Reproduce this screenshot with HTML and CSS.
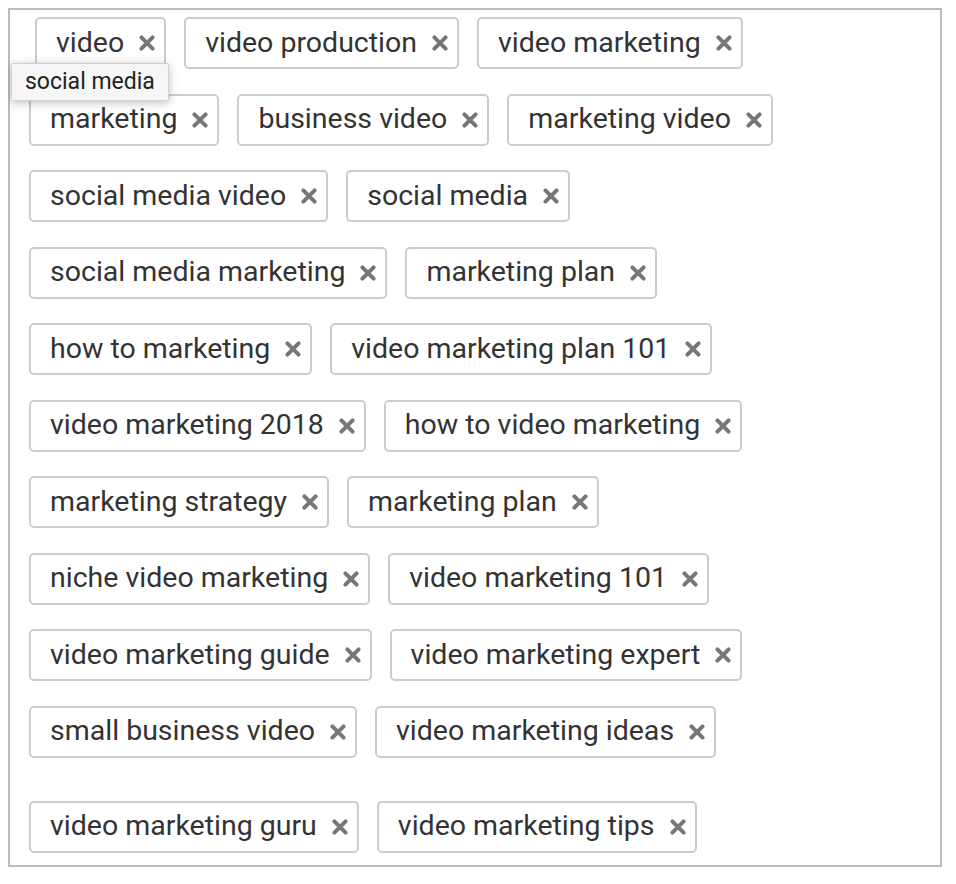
FILE: index.html
```html
<!DOCTYPE html>
<html lang="en">
<head>
  <meta charset="UTF-8">
  <title>Tags</title>
  <link rel="stylesheet" href="styles.css">
</head>
<body>
  <div class="tag-box">
    <div class="tag-row first-row">
      <span class="chip">video<svg class="x" viewBox="0 0 16 16"><path d="M3 3L13 13M13 3L3 13"/></svg></span>
      <span class="chip">video production<svg class="x" viewBox="0 0 16 16"><path d="M3 3L13 13M13 3L3 13"/></svg></span>
      <span class="chip">video marketing<svg class="x" viewBox="0 0 16 16"><path d="M3 3L13 13M13 3L3 13"/></svg></span>
    </div>
    <div class="tag-row">
      <span class="chip">marketing<svg class="x" viewBox="0 0 16 16"><path d="M3 3L13 13M13 3L3 13"/></svg></span>
      <span class="chip">business video<svg class="x" viewBox="0 0 16 16"><path d="M3 3L13 13M13 3L3 13"/></svg></span>
      <span class="chip">marketing video<svg class="x" viewBox="0 0 16 16"><path d="M3 3L13 13M13 3L3 13"/></svg></span>
    </div>
    <div class="tag-row">
      <span class="chip">social media video<svg class="x" viewBox="0 0 16 16"><path d="M3 3L13 13M13 3L3 13"/></svg></span>
      <span class="chip">social media<svg class="x" viewBox="0 0 16 16"><path d="M3 3L13 13M13 3L3 13"/></svg></span>
    </div>
    <div class="tag-row">
      <span class="chip">social media marketing<svg class="x" viewBox="0 0 16 16"><path d="M3 3L13 13M13 3L3 13"/></svg></span>
      <span class="chip">marketing plan<svg class="x" viewBox="0 0 16 16"><path d="M3 3L13 13M13 3L3 13"/></svg></span>
    </div>
    <div class="tag-row">
      <span class="chip">how to marketing<svg class="x" viewBox="0 0 16 16"><path d="M3 3L13 13M13 3L3 13"/></svg></span>
      <span class="chip">video marketing plan 101<svg class="x" viewBox="0 0 16 16"><path d="M3 3L13 13M13 3L3 13"/></svg></span>
    </div>
    <div class="tag-row">
      <span class="chip">video marketing 2018<svg class="x" viewBox="0 0 16 16"><path d="M3 3L13 13M13 3L3 13"/></svg></span>
      <span class="chip">how to video marketing<svg class="x" viewBox="0 0 16 16"><path d="M3 3L13 13M13 3L3 13"/></svg></span>
    </div>
    <div class="tag-row">
      <span class="chip">marketing strategy<svg class="x" viewBox="0 0 16 16"><path d="M3 3L13 13M13 3L3 13"/></svg></span>
      <span class="chip">marketing plan<svg class="x" viewBox="0 0 16 16"><path d="M3 3L13 13M13 3L3 13"/></svg></span>
    </div>
    <div class="tag-row">
      <span class="chip">niche video marketing<svg class="x" viewBox="0 0 16 16"><path d="M3 3L13 13M13 3L3 13"/></svg></span>
      <span class="chip">video marketing 101<svg class="x" viewBox="0 0 16 16"><path d="M3 3L13 13M13 3L3 13"/></svg></span>
    </div>
    <div class="tag-row">
      <span class="chip">video marketing guide<svg class="x" viewBox="0 0 16 16"><path d="M3 3L13 13M13 3L3 13"/></svg></span>
      <span class="chip">video marketing expert<svg class="x" viewBox="0 0 16 16"><path d="M3 3L13 13M13 3L3 13"/></svg></span>
    </div>
    <div class="tag-row">
      <span class="chip">small business video<svg class="x" viewBox="0 0 16 16"><path d="M3 3L13 13M13 3L3 13"/></svg></span>
      <span class="chip">video marketing ideas<svg class="x" viewBox="0 0 16 16"><path d="M3 3L13 13M13 3L3 13"/></svg></span>
    </div>
    <div class="tag-row last-row">
      <span class="chip">video marketing guru<svg class="x" viewBox="0 0 16 16"><path d="M3 3L13 13M13 3L3 13"/></svg></span>
      <span class="chip">video marketing tips<svg class="x" viewBox="0 0 16 16"><path d="M3 3L13 13M13 3L3 13"/></svg></span>
    </div>

    <div class="tooltip">social media</div>
  </div>
</body>
</html>
```

FILE: styles.css
```css
body {
  margin: 8px;
  font-family: Roboto, "Liberation Sans", Arial, sans-serif;
  color: #333;
  background: #fff;
}

.tag-box {
  position: relative;
  width: 934px;
  height: 859px;
  box-sizing: border-box;
  border: 2px solid #bbb;
  padding: 7px 19px 0;
}

.tag-row {
  display: flex;
  gap: 18px;
  margin-bottom: 24.5px;
}

.first-row {
  padding-left: 6px;
}

.last-row {
  margin-top: 43px;
}

.chip {
  display: inline-flex;
  align-items: center;
  height: 52px;
  box-sizing: border-box;
  padding: 0 8px 0 19px;
  border: 2px solid #ccc;
  border-radius: 5px;
  font-size: 28.5px;
  line-height: 1;
  white-space: nowrap;
}

.x {
  width: 18px;
  height: 18px;
  margin-left: 14px;
  fill: none;
  stroke: #777;
  stroke-width: 3.6;
  stroke-linecap: round;
}

.tooltip {
  position: absolute;
  left: 1px;
  top: 53px;
  padding: 4px 13px 5px;
  background: #f6f6f6;
  border: 1px solid #d0d0d0;
  border-radius: 2px;
  font-size: 23px;
  color: #222;
  box-shadow: 0 2px 10px rgba(0, 0, 0, 0.25);
}
```
